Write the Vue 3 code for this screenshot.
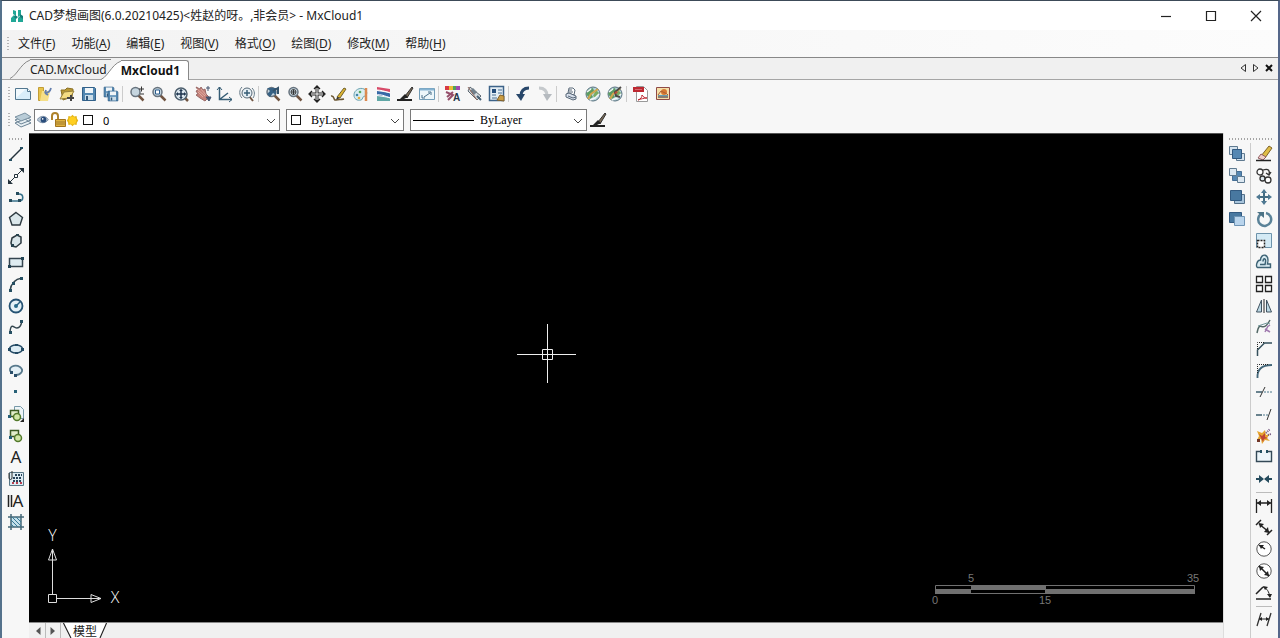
<script setup>
import { ref } from 'vue'

const menus = [
  ['文件', 'F'], ['功能', 'A'], ['编辑', 'E'], ['视图', 'V'],
  ['格式', 'O'], ['绘图', 'D'], ['修改', 'M'], ['帮助', 'H'],
]

const steel = '#4878a0'
const ink = '#24323c'
const glass = `<path d="M9.500 9.500l5 5" stroke="#715542" stroke-width="2.500"/><circle cx="6.500" cy="6" r="4.500" fill="#c5d5df" stroke="#67737e" stroke-width="1.500"/>`
const disk = `<path d="M1.500 1.500h12l1 1v12h-13z" fill="#5287b1" stroke="#316089"/><path d="M4 2h8v5H4z" fill="#f0f5f8"/><path d="M4 9h8v5H4z" fill="#c9dce8"/><path d="M5 10h2v4H5z" fill="#315779"/>`
const globe = `<circle cx="8" cy="8" r="7" fill="#b4d2dc" stroke="#58717e"/><path d="M3 4l5-2 1 3-3 3 2 3-3 2-4-5z" fill="#5c9c62"/><path d="M11 4l3 3-3 5-3-2z" fill="#79ac64"/><path d="M3 13l3-5 7-5" fill="none" stroke="#d0a64d" stroke-width="2"/><path d="M5 14l5-2 4-4M2 6l4-3" fill="none" stroke="#f4f8f8" stroke-width="1.500"/>`

const icons = {
  new: `<path d="M.5 2.500h12l3 3v8H.5z" fill="#d8edf9" stroke="#52778f"/><path d="M1 3h10L1 12z" fill="#fff" opacity=".65"/><path d="M12.500 2.500v3h3" fill="#fff" stroke="#52778f"/>`,
  open: `<path d="M1.500 1.500h5v13h-5z" fill="#e7c44d" stroke="#c29d35"/><path d="M5 5h8l-2 10H3z" fill="#f5df87"/><path d="M14 2c-1 4-3 5-6 5m0 0 1-3m-1 3 3 2" fill="none" stroke="#647fae" stroke-width="1.800"/>`,
  openCloud: `<path d="M2 4h4l2-2 6 1-1 8-9 3z" fill="#b79835" stroke="#8b7023"/><path d="M1 13l4-7 10-1-4 7z" fill="#f4dc82" stroke="#96803d"/><path d="M8 12h7m-3-3v6" stroke="#444" stroke-width="2"/>`,
  save: disk,
  saveAll: `<g transform="scale(.75)">${disk}</g><g transform="translate(4 4) scale(.75)">${disk}</g>`,
  zoomPm: `${glass}<path d="M10 3h5m-2.500-2.500v5M11 8h4" stroke="#333"/>`,
  zoomWin: `${glass}<path d="M4.500 4h4v4h-4z" fill="#fff" stroke="#2b5d8c"/>`,
  zoomAll: `<path d="M12 12l3 3" stroke="#715542" stroke-width="2.500"/><circle cx="8" cy="8" r="6" fill="#dce7ef" stroke="#4c5e6d" stroke-width="1.500"/><path d="M3.500 8h9M8 3.500v9" stroke="#1f3650" stroke-width="1.500"/><path d="M3 8l2-2v4zm10 0l-2-2v4zM8 3L6 5h4zm0 10l-2-2h4z" fill="#1f3650"/>`,
  pan: `<path d="M1 1l4 2 1-2 2 3 2-1 1 5 3 3-4 4-5-3-4-3 2-1-2-3 2-1z" fill="#c48179" stroke="#996967"/><path d="M2 3l8 7M3 6l5 5M6 3l5 6" stroke="#e1aaa0"/><path d="M11 2h4m-2-2v5M11 11h5l-2 4z" stroke="#43536e" fill="#43536e"/>`,
  ucs: `<path d="M2.500 1v12.500H15M2.500 13.500L11 7" fill="none" stroke="#365d75" stroke-width="1.500"/><path d="M0 4l2.500-3L5 4m7 7 3 2.500-3 2.500" fill="none" stroke="#365d75"/>`,
  zoomRt: `<path d="M10 10l4 5" stroke="#715542" stroke-width="2"/><circle cx="8" cy="7" r="5" fill="#e6eff5" stroke="#546775"/><path d="M5 7h6M8 4v6" stroke="#365d75" stroke-width="1.500"/><path d="M13 2c3 3 3 7 1 10M3 1C0 4 0 9 3 12" fill="none" stroke="#647987"/>`,
  zoomPrev: `${glass}<path d="M2 2h9v7L8 7l-3 4-3-3 3-3z" fill="#376184"/><path d="M8 5l5-3v6" fill="none" stroke="#35536b" stroke-width="2"/>`,
  zoomIn: `${glass}<circle cx="6.500" cy="6" r="2.500" fill="none" stroke="#444"/><path d="M4 6h5M6.500 3.500v5" stroke="#333"/>`,
  move: `<path d="M8 1v14M1 8h14" stroke="#222" stroke-width="3"/><path d="M8 2v12M2 8h12" stroke="#fff"/><path d="M5 3l3-3 3 3M5 13l3 3 3-3M3 5L0 8l3 3M13 5l3 3-3 3" fill="none" stroke="#222" stroke-width="1.300"/>`,
  pencil: `<path d="M6 11l7-9 2 1-6 9z" fill="#ddb431" stroke="#71622d"/><path d="M6 11l-1 3 4-2z" fill="#333"/><path d="M0 10c4-1 2 5 5 4s4 0 8-1" fill="none" stroke="#6a5531" stroke-width="1.500"/>`,
  palette: `<path d="M1 9c0-5 6-8 10-6 4 2 3 6 1 7-3 0-2 4-4 4-4 1-7-1-7-5z" fill="#d9edf1" stroke="#6ba2af"/><circle cx="4" cy="9" r="1.300" fill="#4284a8"/><circle cx="7" cy="6" r="1.300" fill="#58a85d"/><circle cx="6" cy="12" r="1.300" fill="#e7ae3d"/><path d="M13 2v13" stroke="#db8950" stroke-width="2.500"/>`,
  layers3: `<path d="M2 1l13 2v3L2 4z" fill="#d84b69"/><path d="M2 5l13 2v4L2 9z" fill="#3869a6"/><path d="M2 10l13 2v3H2z" fill="#60a7a6"/><path d="M1 4c5 0 8 1 14 3M1 9c5-1 9 1 14 3" stroke="#fff" fill="none"/>`,
  brush: `<path d="M8 10l7-9 1 1-6 10z" fill="#796955" stroke="#333"/><path d="M8 8l3 3-4 2H3z" fill="#222"/><path d="M0 14h15" stroke="#222" stroke-width="2"/>`,
  viewport: `<path d="M.5 2.500h15v11H.5z" fill="#edf6fa" stroke="#739db7"/><path d="M1 3.500h14" stroke="#85b3d2" stroke-width="2"/><path d="M5 11l6-4m-2-1h3v3M3 9v3h3" fill="none" stroke="#486f89"/>`,
  textStyle: `<path d="M0 0h4v4H0z" fill="#d83a43"/><path d="M4 0h4v4H4z" fill="#eebd36"/><path d="M8 0h3v4H8z" fill="#4fa35a"/><path d="M11 0h4v4h-4z" fill="#a04bb0"/><path d="M1 6l7 3-5 5M8 6l-6 5" stroke="#954e6a" stroke-width="2"/><text x="8" y="15" font-family="Liberation Sans" font-size="10" font-weight="bold" fill="#26384b">A</text>`,
  tag: `<path d="M3 1l11 9-4 4L1 5z" fill="#d4dbe0" stroke="#5d6770"/><path d="M3 5l3-3 4 4-3 3z" fill="#71808c"/><path d="M1 1l9 13" stroke="#966c60"/><path d="M10 10l4 4" stroke="#465f74" stroke-width="2"/>`,
  props: `<path d="M.5.5h14v14H.5z" fill="#e3edf4" stroke="#3d6389" stroke-width="1.500"/><path d="M3 3h4v4H3z" fill="#244d7b"/><path d="M9 4h4M3 9h4m-4 3h5M9 7h4" stroke="#496f91"/><path d="M8 14l3-5 4 1v5z" fill="#cb9d42" stroke="#80602c"/>`,
  undo: `<path d="M14 2C8 2 6 5 6 10" fill="none" stroke="#28476a" stroke-width="3"/><path d="M1 8h9l-4 7z" fill="#28476a"/>`,
  redo: `<path d="M2 2c6 0 8 3 8 8" fill="none" stroke="#c5c9cc" stroke-width="3"/><path d="M6 8h9l-5 7z" fill="#b5babf"/>`,
  print: `<path d="M5 7l1-5h4l2 2-1 5z" fill="#fff" stroke="#586878"/><path d="M3 8l3-1 7 3v3l-3 1-7-3z" fill="#d7dfeb" stroke="#586878"/><path d="M5 10l5 2 3-1M6 4h3M6 6h4" fill="none" stroke="#586878"/>`,
  globe,
  globe2: `${globe}<path d="M14 1L8 6l1 4 4 1" fill="none" stroke="#4b4947" stroke-width="2"/><path d="M9 5l2 2-4 1z" fill="#c54b36"/>`,
  pdf: `<path d="M3.500.5h7l4 4v11h-11z" fill="#fff" stroke="#999"/><path d="M0 1h11v5H0z" fill="#bd2831"/><path d="M2 3.500h7" fill="none" stroke="#d56a70"/><path d="M5 14c3-1 4-3 4-5 1 2 3 3 5 3-3 0-6 1-9 2z" fill="none" stroke="#bd2831"/>`,
  image: `<path d="M1.500 1.500h13v12h-13z" fill="#f5dfa8" stroke="#8f4b46"/><path d="M3 9h10v3H3z" fill="#659eb3"/><circle cx="9" cy="6" r="3" fill="#d77b33"/><path d="M3 9l3-4 6 3 1 1M3 11h10" stroke="#ad5d32" fill="none"/>`,
  layer: `<path d="M0 11l6 4 10-4-6-4zM0 8l6 4 10-4-6-4z" fill="#e8f0f4" stroke="#6b8395"/><path d="M0 5l6 4 10-4-6-4z" fill="#b9ccd7" stroke="#7b92a2"/>`,
  eye: `<path d="M0 7c4-5 10-6 14 0-4 5-10 5-14 0z" fill="#b8c6d3" stroke="#6f849e"/><circle cx="8" cy="7" r="3.500" fill="#284c7b"/><circle cx="7" cy="6" r="1" fill="#fff"/>`,
  lock: `<path d="M2 8V4c0-4 6-4 6 0v3" fill="none" stroke="#ae822a" stroke-width="2"/><path d="M5.500 7.500h10v7h-10z" fill="#e0b341" stroke="#a2751f"/><path d="M6 10h9m-9 2h9" stroke="#9d792f"/>`,
  sun: `<path d="M8 1l2 2 3-.5.500 3L15 8l-1.500 2.500-.5 3-3-.5-2 2-2-2-3 .5-.5-3L1 8l1.500-2.500.500-3 3 .5z" fill="#e6b719"/><circle cx="8" cy="8" r="4.500" fill="#ffcf21"/>`,
  line: `<path d="M2 14L14 2" stroke="${ink}" stroke-width="1.500"/><path d="M1 13h3v2H1zM12 1h3v2h-3z" fill="#254f62"/>`,
  xline: `<path d="M1 15L15 1" stroke="${ink}" fill="none"/><path d="M0 16v-5l5 5zM16 0v5l-5-5z" fill="${ink}"/><path d="M6.500 6.500h3v3h-3z" fill="#fff" stroke="${ink}"/>`,
  pline: `<path d="M2 12h9c5 0 5-7 0-7H8" fill="none" stroke="#38718a" stroke-width="1.600"/><path d="M1 10h3v3H1zM10 10h3v3h-3zM8 3h3v3H8z" fill="#254b5d"/>`,
  polygon: `<path d="M8 1.500L14.500 6.500L12 14H4L1.500 6.500z" fill="#dbe7eb" stroke="#2c3940" stroke-width="1.400"/>`,
  revcloud: `<path d="M4 5l5-3 4 2v6l-5 4-4-1-1-3z" fill="#dbe7eb" stroke="#2c3940" stroke-width="1.500"/><path d="M3 11h3v3H3zM8 1h3v2H8z" fill="#28434f"/>`,
  rect: `<path d="M1.500 4.500h13v8h-13z" fill="#dfecf2" stroke="#34444f" stroke-width="1.500"/><path d="M0 11h3v3H0zM13 3h3v3h-3z" fill="#234354"/>`,
  arc: `<path d="M2 15C3 7 7 3 14 2" fill="none" stroke="#33454e" stroke-width="1.500"/><path d="M1 13h3v3H1zM4 6h3v3H4zM12 1h3v3h-3z" fill="#254f62"/>`,
  circle: `<circle cx="8" cy="8" r="6.500" fill="#e4f1f7" stroke="#255273" stroke-width="1.800"/><path d="M8 8l4-4" stroke="#275f7f" stroke-width="1.500"/><circle cx="8" cy="8" r="2" fill="#276a8b"/>`,
  spline: `<path d="M2 13C3 3 6 9 9 9s4-2 5-7" fill="none" stroke="#33454e" stroke-width="1.400"/><path d="M1 12h3v3H1zM12 1h3v3h-3z" fill="#254f62"/>`,
  ellipse: `<ellipse cx="8" cy="8" rx="6.500" ry="4" fill="#ddecf4" stroke="#254b66" stroke-width="1.500"/><path d="M0 7h3v3H0zM13 7h3v3h-3zM7 3h3v2H7zM7 11h3v2H7z" fill="#234a64"/>`,
  ellipseArc: `<path d="M3 9C-1 4 7 1 12 4c5 4 0 8-4 8" fill="#e4f0f6" stroke="#58798c" stroke-width="1.800"/><path d="M2 8h3v3H2zM6 11h3v3H6z" fill="#294e69"/>`,
  point: `<path d="M6 6h3v3H6z" fill="#286178"/>`,
  insert: `<path d="M6.500.5h6l3 3v9h-9z" fill="#eef5f8" stroke="#7799a8"/><path d="M2.500 4.500h8v6h-8z" fill="#e2eecb" stroke="#3b5a22" stroke-width="1.500"/><circle cx="9" cy="11" r="3.500" fill="#d1e7a7" stroke="#52792b" stroke-width="1.500"/><path d="M12 16h4v-4z" fill="#222"/><path d="M0 9h3v3H0z" fill="#286178"/>`,
  block: `<path d="M2.500 2.500h8v6h-8z" fill="#e2eecb" stroke="#3b5a22" stroke-width="1.500"/><circle cx="10" cy="10" r="3.500" fill="#d1e7a7" stroke="#52792b" stroke-width="1.500"/><path d="M1 8h3v3H1z" fill="#286178"/>`,
  text: `<text x="8" y="14" text-anchor="middle" font-family="Noto Sans" font-size="17" fill="#222">A</text>`,
  table: `<path d="M1.500 1.500h14v13h-14z" fill="#deecf3" stroke="#587787"/><path d="M7 4h7M5 7h9M5 10h9" stroke="#294359" stroke-dasharray="2 1" stroke-width="2"/><path d="M4 0v7c0 2-3 2-3 0V2" fill="none" stroke="#333"/><path d="M4 11h2v2H4zM8 11h2v2H8zM12 11h2v2h-2z" fill="#b84051"/>`,
  mtext: `<path d="M.5 2v12M3.500 2v12" stroke="#222" stroke-width="1.500"/><text x="10" y="14" text-anchor="middle" font-family="Noto Sans" font-size="17" fill="#222">A</text>`,
  hatch: `<path d="M3 3h10v10H3z" fill="#c4e0eb"/><path d="M0 3h16M0 13h16M3 0v16M13 0v16" stroke="#456878" stroke-width="1.500"/><path d="M4 3l9 9M8 3l5 5M3 6l7 7M3 10l3 3" stroke="#397a97"/>`,
  front: `<path d="M.5.5h8v8h-8zM7.500 7.500h8v7h-8z" fill="#d5e3ee" stroke="#5f7a90"/><path d="M3.500 3.500h9v9h-9z" fill="#5688b3" stroke="#325a81"/>`,
  back: `<path d="M3.500 3.500h9v9h-9z" fill="#5688b3" stroke="#456f95"/><path d="M.5.5h7v7h-7zM8.500 8.500h7v6h-7z" fill="#dce8f1" stroke="#5f7a90"/>`,
  above: `<path d="M5.500 5.500h10v9h-10z" fill="#a7c4dc" stroke="#526f88"/><path d="M1.500 1.500h11v10h-11z" fill="${steel}" stroke="#325a81"/>`,
  under: `<path d="M.5 1.500h12v10H.5z" fill="${steel}" stroke="#325a81"/><path d="M5.500 5.500h10v9h-10z" fill="#b9d4ec" stroke="#6f94b4"/>`,
  erase: `<path d="M5 10l8-10 3 2-7 10z" fill="#dfbd47" stroke="#7e6228"/><path d="M2 12l3-4 5 3-3 3z" fill="#efd0c8" stroke="#905c62"/><path d="M0 14.500h15" stroke="#222" stroke-width="1.500"/>`,
  copy: `<circle cx="4" cy="4" r="3" fill="#fff" stroke="#333" stroke-width="1.300"/><circle cx="6.500" cy="10.500" r="2.500" fill="#dce7ed" stroke="#333" stroke-width="1.300"/><circle cx="12" cy="12" r="3" fill="#fff" stroke="#333" stroke-width="1.300"/><path d="M7 2c6-2 7 1 6 5m-3-2 3 2 2-3" fill="none" stroke="#333" stroke-width="1.300"/>`,
  moveBlue: `<path d="M8 3v10M3 8h10" stroke="#456d83" stroke-width="2"/><path d="M8 0l3 4H5zM8 16l-3-4h6zM0 8l4-3v6zM16 8l-4-3v6z" fill="#4e7892"/>`,
  rotate: `<path d="M5 3a6.500 6.500 0 1 0 5-1" fill="none" stroke="#5a8298" stroke-width="2.500"/><path d="M1 1h7v6z" fill="#4c7285"/>`,
  scale: `<path d="M.5.5h15v14H.5z" fill="#d4eaf5" stroke="#6d93ab"/><path d="M1 7h8v8H1z" fill="#fff"/><path d="M1.500 7.500h7v7h-7z" stroke="#222" stroke-width="1.500" stroke-dasharray="2 1"/>`,
  offset: `<path d="M1.500 13.500h13V10h-3c3-11-7-11-7-4-4 0-5 7-3 7.500z" fill="#d8eaf1" stroke="#3c6274" stroke-width="1.400"/><path d="M4 10.500h5c2-7-2-7-2-3" fill="none" stroke="#3c6274" stroke-width="1.500"/>`,
  array: `<path d="M.5.5h6v6h-6zM9.500.5h6v6h-6zM.5 9.500h6v6h-6zM9.500 9.500h6v6h-6z" fill="#fff" stroke="#222" stroke-width="1.300"/>`,
  mirror: `<path d="M5.500 2v12h-5zM10.500 2l5 12h-5z" fill="#bcd8e4" stroke="#405260"/><path d="M8 1v14" stroke="#222"/>`,
  sketch: `<path d="M1 14C4-1 6 16 14 1" fill="none" stroke="#536866" stroke-width="1.500"/><path d="M2 7l9-3 3 1" stroke="#72969a"/><path d="M9 10l5 3m-3-5 3-2m-5 7 3-6" stroke="#a17bb0" stroke-width="1.500"/>`,
  chamfer: `<path d="M1.500 15V9l7-7H16" fill="none" stroke="#35505c" stroke-width="1.500"/><path d="M1.500 8V1.500H9" fill="none" stroke="#222" stroke-dasharray="1 1"/>`,
  fillet: `<path d="M1.500 15C1 7 5 2 16 2" fill="none" stroke="#426679" stroke-width="1.800"/><path d="M1.500 10V1.500H12" fill="none" stroke="#222" stroke-dasharray="1 1"/>`,
  trim: `<path d="M0 8h6" stroke="#3a5b6b" stroke-width="1.500"/><path d="M4 13L9 3" stroke="#333"/><path d="M8 8h8" stroke="#4b7689" stroke-dasharray="2 1"/>`,
  extend: `<path d="M0 9h6" stroke="#3a5b6b" stroke-width="1.500"/><path d="M11 14l4-11" stroke="#333"/><path d="M7 9h5" stroke="#4b7689" stroke-dasharray="2 1"/>`,
  explode: `<path d="M1 3l5 2 3-3 1 5 4-1-3 4 3 3-5-1-3 4-1-5-4 1 2-4z" fill="#e6a630"/><path d="M3 6l3 2 3-3v4l3 1-4 1-1 3-2-4z" fill="#be4534"/><path d="M1 11h3v3H1z" fill="#713628"/><path d="M10 5l4-4m-2 6 3-1" stroke="#735780" stroke-dasharray="1 1" stroke-width="2"/>`,
  break: `<path d="M5 2.500H.5v10h15v-10H11" fill="#edf6fa" stroke="#344957" stroke-width="1.400"/><path d="M4 1h2v3H4zM10 1h2v3h-2z" fill="#235162"/>`,
  join: `<path d="M0 8h7m9 0H9" stroke="#254b5d" stroke-width="2"/><path d="M3 4l5 4-5 4zM13 4L8 8l5 4z" fill="#254b5d"/>`,
  dimLinear: `<path d="M.5 1v14M15.500 1v14M1 5h14" stroke="#222" stroke-width="1.300"/><path d="M1 5l4-3v6zM15 5l-4-3v6z" fill="#222"/>`,
  dimAligned: `<path d="M3 4l10 8M0 5l5-5m6 15 5-5" stroke="#222" stroke-width="1.500"/><path d="M3 3l5 1-4 4zm10 10-1-6-4 5z" fill="#222"/>`,
  dimRadius: `<circle cx="8" cy="8" r="7.200" fill="#fff" stroke="#555"/><path d="M3 4l6 4" stroke="#222" stroke-width="1.500"/><path d="M3 4l5 0-3 4z" fill="#222"/>`,
  dimDiameter: `<circle cx="8" cy="8" r="7.200" fill="#fff" stroke="#555"/><path d="M3 3l10 10" stroke="#222" stroke-width="1.500"/><path d="M3 3l5 1-4 4zm10 10-1-5-4 4z" fill="#222"/>`,
  dimAngular: `<path d="M0 9l7-7M0 14h15" stroke="#222" stroke-width="1.500"/><path d="M7 2c4 1 6 5 7 10" fill="none" stroke="#222"/><path d="M7 1l5 1-3 3zm7 12-3-4h5z" fill="#222"/>`,
  dimEdit: `<path d="M1 14L5 1M11 14l4-13" stroke="#333" stroke-width="1.300"/><path d="M3 7h10" stroke="#222"/><path d="M3 7l3-2v4zm10 0-3-2v4z" fill="#222"/>`,
}

const groups = [
  ['new', 'open', 'openCloud', 'save', 'saveAll'],
  ['zoomPm', 'zoomWin', 'zoomAll', 'pan', 'ucs', 'zoomRt'],
  ['zoomPrev', 'zoomIn', 'move', 'pencil', 'palette', 'layers3', 'brush', 'viewport'],
  ['textStyle', 'tag', 'props'],
  ['undo', 'redo'],
  ['print', 'globe', 'globe2'],
  ['pdf', 'image'],
]
const drawTools = ['line', 'xline', 'pline', 'polygon', 'revcloud', 'rect', 'arc', 'circle', 'spline', 'ellipse', 'ellipseArc', 'point', 'insert', 'block', 'text', 'table', 'mtext', 'hatch']
const orderTools = ['front', 'back', 'above', 'under']
const modifyTools = ['erase', 'copy', 'moveBlue', 'rotate', 'scale', 'offset', 'array', 'mirror', 'sketch', 'chamfer', 'fillet', 'trim', 'extend', 'explode', 'break', 'join']
const dimTools = ['dimLinear', 'dimAligned', 'dimRadius', 'dimDiameter', 'dimAngular']

const tabs = ['CAD.MxCloud', 'MxCloud1']
const active = ref('MxCloud1')
</script>

<template>
  <div class="window">
    <header class="title-bar">
      <svg class="logo" viewBox="0 0 14 14" aria-hidden="true">
        <path d="M1 9l3-3 2 3v4H1zM3 1l3 1v5L3 5zM8 1h3v5L8 8zM8 9l2-2 3 2v4H8z" fill="#20a796" />
        <path d="M5 6l3 2-2 2-2-2zM10 5l3 2v3l-3-2z" fill="#147d78" />
      </svg>
      <h1>CAD梦想画图(6.0.20210425)&lt;姓赵的呀。,非会员&gt; - MxCloud1</h1>
      <div class="window-buttons">
        <button aria-label="minimize"><svg viewBox="0 0 12 12"><path d="M1 6.500h10" /></svg></button>
        <button aria-label="maximize"><svg viewBox="0 0 12 12"><path d="M1.500 1.500h9v9h-9z" /></svg></button>
        <button aria-label="close"><svg viewBox="0 0 12 12"><path d="M1 1l10 10M11 1L1 11" /></svg></button>
      </div>
    </header>

    <nav class="menu-bar">
      <i class="grip"></i>
      <button v-for="[label, key] in menus" :key="key">{{ label }}(<u>{{ key }}</u>)</button>
    </nav>

    <div class="tab-strip">
      <button v-for="tab in tabs" :key="tab" class="tab" :class="{ active: tab === active }" @click="active = tab">
        <svg class="slant" viewBox="0 0 24 20" aria-hidden="true"><path d="M0 19.500C9 16 12 .5 24 .5V20H0z" class="fill" /><path d="M0 19.500C8 16 12 .5 24 .5" class="edge" /></svg>
        <span>{{ tab }}</span>
      </button>
      <div class="tab-controls">
        <button aria-label="previous tab"><svg viewBox="0 0 8 10"><path d="M6.500 1.500v7L2 5z" fill="none" stroke="#333" /></svg></button>
        <button aria-label="next tab"><svg viewBox="0 0 8 10"><path d="M1.500 1.500v7L6 5z" fill="none" stroke="#333" /></svg></button>
        <button aria-label="close tab"><svg viewBox="0 0 8 10"><path d="M1 2l6 6M7 2L1 8" stroke="#111" stroke-width="2" /></svg></button>
      </div>
    </div>

    <div class="toolbar">
      <i class="grip"></i>
      <div v-for="(group, n) in groups" :key="n" class="group">
        <button v-for="name in group" :key="name" class="tool" :aria-label="name"><svg viewBox="0 0 16 16" v-html="icons[name]"></svg></button>
      </div>
    </div>

    <div class="toolbar properties">
      <i class="grip"></i>
      <button class="tool" aria-label="layer"><svg viewBox="0 0 16 16" v-html="icons.layer"></svg></button>
      <div class="combo layer-combo">
        <svg class="small" viewBox="0 0 16 16" v-html="icons.eye"></svg>
        <svg class="mid" viewBox="0 0 16 16" v-html="icons.lock"></svg>
        <svg class="small" viewBox="0 0 16 16" v-html="icons.sun"></svg>
        <i class="swatch"></i>
        <select aria-label="current layer"><option>0</option></select>
        <svg class="chevron" viewBox="0 0 10 6"><path d="M1 1l4 4 4-4" /></svg>
      </div>
      <div class="combo color-combo">
        <i class="swatch"></i>
        <select aria-label="color"><option>ByLayer</option></select>
        <svg class="chevron" viewBox="0 0 10 6"><path d="M1 1l4 4 4-4" /></svg>
      </div>
      <div class="combo line-combo">
        <i class="sample"></i>
        <select aria-label="linetype"><option>ByLayer</option></select>
        <svg class="chevron" viewBox="0 0 10 6"><path d="M1 1l4 4 4-4" /></svg>
      </div>
      <button class="tool" aria-label="match"><svg viewBox="0 0 16 16" v-html="icons.brush"></svg></button>
    </div>

    <main class="workspace">
      <aside class="rail">
        <i class="grip flat"></i>
        <div class="stack draw">
          <button v-for="name in drawTools" :key="name" class="tool" :aria-label="name"><svg viewBox="0 0 16 16" v-html="icons[name]"></svg></button>
        </div>
      </aside>

      <section class="center">
        <div class="canvas">
          <svg class="crosshair" viewBox="0 0 60 60"><path d="M0 30.500h59M30.500 0v59M25.500 25.500h10v10h-10z" /></svg>
          <svg class="axes" viewBox="0 0 80 80">
            <path d="M7.500 64V30M12 68.500h44M3.500 64.500h8v8h-8zM7.500 19l4 11h-8zM56 68.500l-10-4v8z" />
            <path d="M7.500 19v11M46 68.500h10" />
            <text x="7.500" y="11" text-anchor="middle">Y</text>
            <text x="70" y="73" text-anchor="middle">X</text>
          </svg>
          <svg class="scale-bar" viewBox="0 0 270 36">
            <path d="M5.500 13.500h259v8h-259z" fill="none" stroke="#707070" />
            <path d="M5 17h36v5H5zM41 13h75v5H41zM115 17h150v5H115z" fill="#707070" />
            <text x="41" y="10" text-anchor="middle">5</text>
            <text x="263" y="10" text-anchor="middle">35</text>
            <text x="5" y="32" text-anchor="middle">0</text>
            <text x="115" y="32" text-anchor="middle">15</text>
          </svg>
        </div>
        <footer class="model-bar">
          <button class="arrow" aria-label="previous layout"><svg viewBox="0 0 6 8"><path d="M5.500 0v8L1 4z" /></svg></button>
          <button class="arrow" aria-label="next layout"><svg viewBox="0 0 6 8"><path d="M.5 0v8L5 4z" /></svg></button>
          <button class="model">
            <svg viewBox="0 0 48 16" aria-hidden="true"><path d="M1 0l8 16h31l7-16z" fill="#fff" /><path d="M1 0l8 16M40 16l7-16" fill="none" stroke="#222" stroke-width="1.200" /></svg>
            <span>模型</span>
          </button>
        </footer>
      </section>

      <aside class="right">
        <i class="grip flat wide"></i>
        <div class="rail order">
          <div class="stack four">
            <button v-for="name in orderTools" :key="name" class="tool" :aria-label="name"><svg viewBox="0 0 16 16" v-html="icons[name]"></svg></button>
          </div>
        </div>
        <div class="rail modify">
          <div class="stack sixteen">
            <button v-for="name in modifyTools" :key="name" class="tool" :aria-label="name"><svg viewBox="0 0 16 16" v-html="icons[name]"></svg></button>
          </div>
          <hr>
          <div class="stack five">
            <button v-for="name in dimTools" :key="name" class="tool" :aria-label="name"><svg viewBox="0 0 16 16" v-html="icons[name]"></svg></button>
          </div>
          <hr>
          <button class="tool last" aria-label="dimEdit"><svg viewBox="0 0 16 16" v-html="icons.dimEdit"></svg></button>
        </div>
      </aside>
    </main>
  </div>
</template>

<style>
html, body, #app { height: 100%; }
body { margin: 0; overflow: hidden; }
</style>

<style scoped>
* { box-sizing: border-box; }
.window {
  display: flex; flex-direction: column; height: 100%;
  background: #f5f5f5; color: #222;
  border: solid #3c4a58; border-width: 1px 2px 0 2px; border-left-color: #55728c; border-right-color: #55678a;
  font: 12px/16px "Noto Sans", "Noto Sans CJK SC", sans-serif;
}
button { margin: 0; padding: 0; border: 0; background: none; font: inherit; color: inherit; }
svg { display: block; flex: none; }

.title-bar { display: flex; align-items: center; flex: none; height: 29px; padding-left: 8px; background: #fff; }
.logo { width: 14px; height: 14px; margin-right: 5px; }
h1 { margin: 0; font-size: 12px; font-weight: 400; white-space: nowrap; }
.window-buttons { display: flex; margin-left: auto; }
.window-buttons button { display: grid; place-items: center; width: 45px; height: 28px; }
.window-buttons svg { width: 12px; height: 12px; fill: none; stroke: #222; stroke-width: 1.2; }

.grip { flex: none; width: 2px; height: 14px; background: repeating-linear-gradient(#b4b4b4 0 1px, transparent 1px 3px); }
.menu-bar { display: flex; align-items: center; flex: none; height: 27px; padding-left: 5px; gap: 16px; background: linear-gradient(90deg, #f3f3f3, #fcfcfc); }
.menu-bar .grip { margin-right: -7px; }
.menu-bar button { white-space: nowrap; }
u { text-underline-offset: 2px; }

.tab-strip { display: flex; align-items: flex-end; flex: none; height: 23px; padding-left: 8px; background: #f0f0f0; border-top: 1px solid #888; border-bottom: 1px solid #a5a5a5; }
.tab { position: relative; display: flex; height: 20px; }
.tab span { display: block; height: 20px; border-top: 1px solid #888; background: #f0f0f0; padding-right: 4px; margin-left: -4px; line-height: 20px; }
.tab .slant { width: 24px; height: 20px; }
.tab .fill { fill: #f0f0f0; }
.tab .edge { fill: none; stroke: #888; }
.tab.active { z-index: 1; margin: 0 0 -1px -10px; font-family: "Open Sans", sans-serif; font-weight: 700; color: #111; }
.tab.active span { background: #fff; border-right: 1px solid #888; border-radius: 0 3px 0 0; padding-right: 8px; line-height: 19px; }
.tab.active .fill { fill: #fff; }
.tab-controls { display: flex; align-self: center; gap: 5px; margin-left: auto; padding: 0 5px 2px 0; }
.tab-controls svg { width: 8px; height: 10px; }

.toolbar { display: flex; align-items: center; flex: none; height: 27px; padding-left: 6px; background: #f7f7f7; }
.toolbar > .grip { margin-right: 2px; }
.group { display: flex; align-items: center; }
.group + .group::before { content: ""; width: 1px; height: 16px; margin-right: 3px; background: #ccc; }
.tool { display: grid; place-items: center; flex: none; width: 22px; height: 22px; }
.tool svg { width: 16px; height: 16px; fill: none; overflow: visible; }
.properties { height: 26px; }
.combo { display: flex; align-items: center; position: relative; height: 22px; border: 1px solid #7a7a7a; background: #fff; }
.combo + .combo { margin-left: 6px; }
.layer-combo { width: 246px; padding-left: 2px; }
.color-combo { width: 118px; padding-left: 4px; }
.line-combo { width: 177px; padding-left: 2px; }
.combo select { flex: 1; min-width: 0; height: 20px; margin: 0; padding: 0 20px 0 10px; border: 0; outline: 0; appearance: none; background: none; color: #000; font: 12px "Liberation Serif", serif; }
.layer-combo select { font: 11px "Noto Sans", sans-serif; }
.line-combo select { padding-left: 6px; }
.chevron { position: absolute; right: 3px; top: 8px; width: 10px; height: 6px; fill: none; stroke: #444; pointer-events: none; }
.small { width: 13px; height: 13px; }
.mid { width: 16px; height: 16px; }
.swatch { flex: none; width: 10px; height: 10px; border: 1px solid #111; background: #fff; }
.layer-combo .swatch { margin-left: 4px; }
.sample { flex: none; width: 61px; height: 1px; background: #000; }

.workspace { display: flex; flex: 1; min-height: 0; }
.rail { display: flex; flex-direction: column; align-items: center; flex: none; width: 27px; background: #f7f7f7; }
.grip.flat { width: 14px; height: 2px; margin: 5px 0 3px; background: repeating-linear-gradient(90deg, #a4a4a4 0 1px, transparent 1px 3px); }
.stack { display: flex; flex-direction: column; flex: none; }
.stack .tool { flex: 1; min-height: 0; }
.draw { height: 390px; }
.four { height: 87px; }
.sixteen { height: 347px; }
.five { height: 109px; }
.center { display: flex; flex-direction: column; flex: 1; min-width: 0; }
.canvas { position: relative; flex: 1; min-height: 0; background: #000; border-top: 1px solid #555; overflow: hidden; }
.crosshair { position: absolute; left: 488px; top: 190px; width: 60px; height: 60px; fill: none; stroke: #eee; }
.axes { position: absolute; left: 16px; bottom: 12px; width: 80px; height: 80px; fill: none; stroke: #ddd; overflow: visible; }
.axes text { fill: #fff; stroke: none; font: 300 16px "Open Sans", sans-serif; }
.scale-bar { position: absolute; right: 23px; bottom: 14px; width: 270px; height: 36px; overflow: visible; }
.scale-bar text { font: 11px "Liberation Sans", sans-serif; fill: #777; }
.model-bar { display: flex; flex: none; height: 16px; padding-left: 2px; background: #f0f0f0; border-top: 1px solid #888; }
.arrow { display: grid; place-items: center; width: 15px; height: 15px; border-right: 1px solid #bbb; }
.arrow svg { width: 6px; height: 8px; fill: #555; }
.model { position: relative; width: 48px; height: 15px; line-height: 15px; }
.model svg { position: absolute; inset: 0; width: 48px; height: 15px; }
.model span { position: relative; display: block; height: 15px; font-family: "Noto Sans CJK SC", sans-serif; }

.right { display: grid; grid-template: 10px 1fr / 27px 27px; flex: none; background: #f7f7f7; border-left: 1px solid #ddd; overflow: hidden; }
.right .wide { grid-column: 1 / -1; width: 44px; justify-self: center; }
.order { border-right: 1px solid #ccc; }
.modify { padding-right: 2px; }
hr { width: 16px; height: 1px; flex: none; margin: 2px 0; border: 0; background: #bbb; }
.last { height: 22px; }
</style>
